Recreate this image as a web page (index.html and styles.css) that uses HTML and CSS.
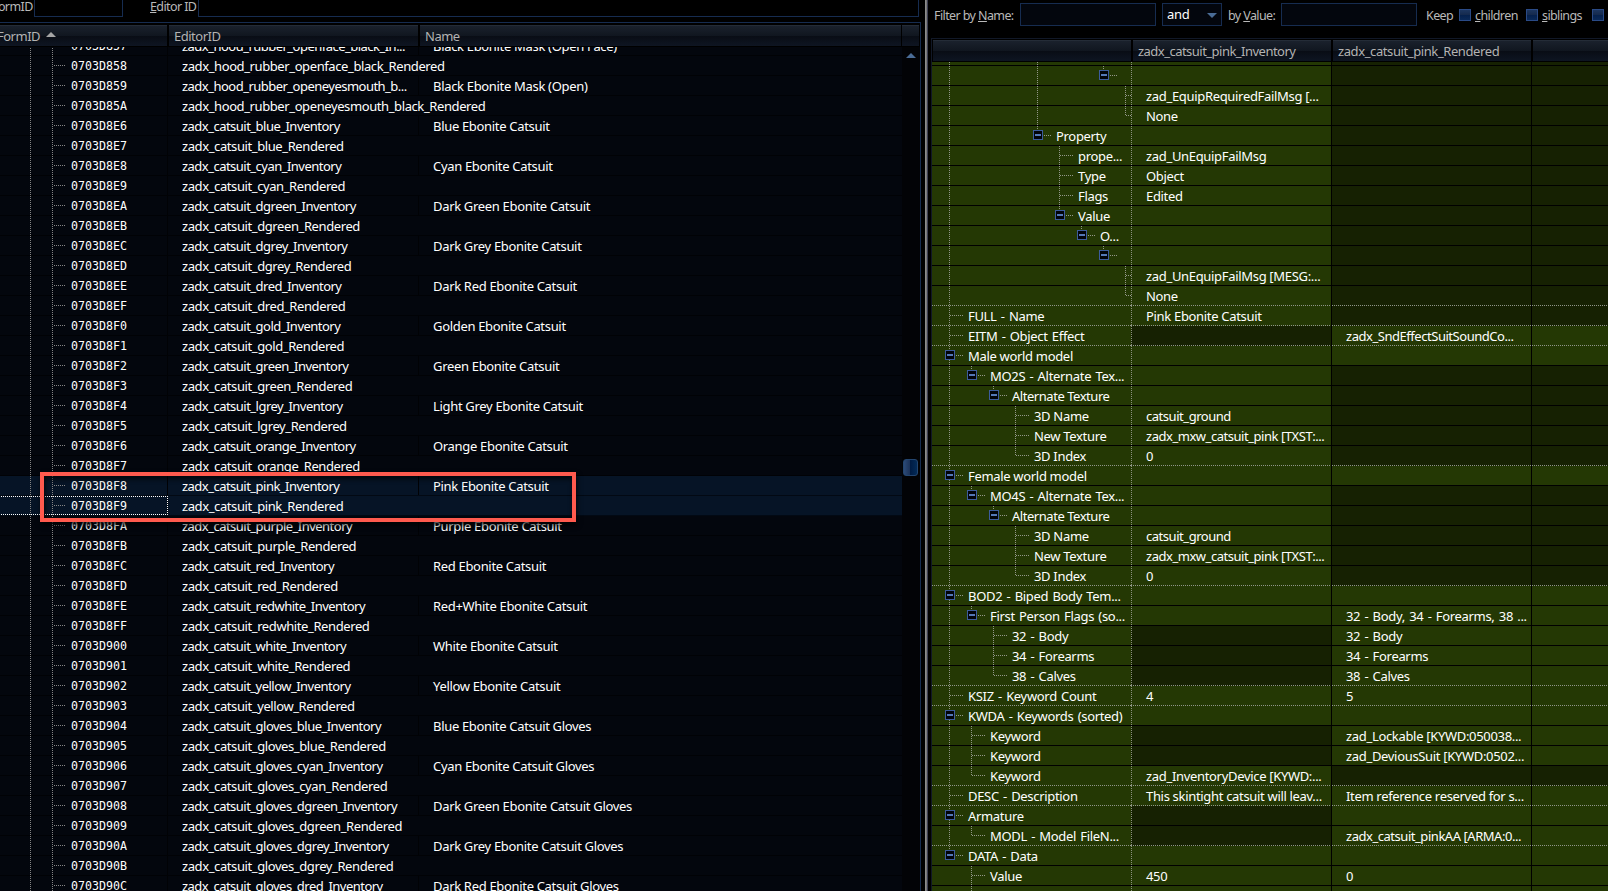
FILE: index.html
```
<!DOCTYPE html>
<html lang="en">
<head>
    <meta charset="UTF-8">
    <title>Record Viewer</title>
    <link rel="stylesheet" href="styles.css">
</head>
<body>
    <div class="left-pane">
        <div class="search-bar">
            <label class="form-label">FormID</label>
            <div class="field form-field"></div>
            <label class="editor-label"><u>E</u>ditor ID</label>
            <div class="field editor-field"></div>
        </div>
        <div class="list-box">
            <div class="list-header">
                <div class="head h-form"><span>FormID</span><svg width="10" height="5"><path d="M5 0L10 5H0z" fill="#a5a5a5"/></svg></div>
                <div class="head h-editor">EditorID</div>
                <div class="head h-name">Name</div>
                <div class="head h-end"></div>
            </div>
            <div class="list-body">
                <div class="rows" id="records"></div>
                <div class="scrollbar">
                    <svg width="10" height="5"><path d="M5 0L10 5H0z" fill="#4a6c96"/></svg>
                    <div class="thumb"></div>
                </div>
            </div>
        </div>
        <div class="highlight"></div>
    </div>
    <div class="splitter"></div>
    <div class="right-pane">
        <div class="filter-bar">
            <label class="name-label">Filter by <u>N</u>ame:</label>
            <div class="field filter-field"></div>
            <div class="field select"><span>and</span><svg width="10" height="5"><path d="M0 0H10L5 5z" fill="#4a6c96"/></svg></div>
            <label class="value-label">by <u>V</u>alue:</label>
            <div class="field filter-field"></div>
            <span class="keep">Keep</span>
            <i class="check"></i><label class="children"><u>c</u>hildren</label>
            <i class="check"></i><label class="siblings"><u>s</u>iblings</label>
            <i class="check"></i>
        </div>
        <div class="grid-box">
            <div class="grid-header">
                <div class="head"></div>
                <div class="head tight">zadx_catsuit_pink_Inventory</div>
                <div class="head rendered">zadx_catsuit_pink_Rendered</div>
                <div class="head"></div>
            </div>
            <div class="grid-body"><div id="details"></div></div>
        </div>
    </div>
    <script src="script.js"></script>
</body>
</html>
```
FILE: styles.css
```
* { padding: 0; margin: 0; box-sizing: border-box; }
body {
    background: #000;
    color: #fff;
    font: 13px/20px "Noto Sans", "Open Sans", sans-serif;
    letter-spacing: -0.32px;
    width: 1608px;
    height: 891px;
    overflow: hidden;
    display: flex;
    white-space: nowrap;
}
svg { display: block; flex: none; }
label, .keep {
    color: #b9b9b9;
    font-size: 12.5px;
    letter-spacing: -0.6px;
    flex: none;
}
.field {
    border: 1px solid #162c50;
    background: #03060d;
    flex: none;
}

/* left side */
.left-pane {
    width: 921px;
    flex: none;
    position: relative;
    display: flex;
    flex-direction: column;
}
.search-bar {
    height: 22px;
    display: flex;
    line-height: 13px;
}
.search-bar .field {
    height: 17px;
    border-top: none;
    background: #000;
}
.form-label { width: 34px; margin-left: -8px; margin-right: 8px; }
.form-field { width: 89px; }
.editor-label { width: 48px; margin-left: 27px; }
.editor-field { width: 721px; }
.list-box {
    flex: 1;
    border-top: 1px solid #162c50;
    border-right: 1px solid #162c50;
    padding-top: 2px;
    overflow: hidden;
}
.list-header, .grid-header { display: flex; gap: 2px; }
.list-header { height: 22px; letter-spacing: -0.5px; }
.head {
    height: 21px;
    background: linear-gradient(#1a212c 0, #10161f 50%, #090d15 51%, #0e1522 100%);
    border-top: 1px solid #242c37;
    color: #b3b3b3;
    line-height: 21px;
    flex: none;
}
.h-form { width: 167px; display: flex; }
.h-form span { width: 49px; margin-left: -3px; }
.h-form svg { margin-top: 6px; }
.h-editor { width: 249px; padding-left: 5px; }
.h-name { width: 481px; padding-left: 5px; }
.h-end { width: 17px; margin-left: -1px; }
.list-body {
    display: flex;
    height: 844px;
    overflow: hidden;
}
.rows { width: 902px; margin-top: -11px; }
.record {
    display: flex;
    height: 20px;
    background: #03060d;
    border-bottom: 1px solid #010205;
}
.record.selected { background: #061426; border-color: #020913; }
.record > div { flex: none; }
.rec-id {
    width: 169px;
    margin-left: -1px;
    padding-left: 72px;
    border-right: 1px solid #010205;
    font: 11.65px/20px "DejaVu Sans Mono", monospace;
    letter-spacing: 0;
    background:
        repeating-linear-gradient(#858585 0 1px, transparent 1px 2px) 31px 0 / 1px 20px no-repeat,
        repeating-linear-gradient(#858585 0 1px, transparent 1px 2px) 53px 0 / 1px 20px no-repeat,
        repeating-linear-gradient(90deg, #858585 0 1px, transparent 1px 2px) 55px 9px / 12px 1px no-repeat;
}
.focused .rec-id {
    outline: 1px dotted #fff;
    outline-offset: -1px;
}
.rec-editor { width: 251px; padding-left: 14px; line-height: 21px; }
.rec-name { padding-left: 14px; line-height: 21px; }
.record .named { border-right: 1px solid #010205; }
.tight { letter-spacing: -0.52px; }
.rendered { letter-spacing: -0.4px; }
.texture { letter-spacing: -0.46px; }
.dashed { word-spacing: 1.2px; }
.scrollbar {
    width: 18px;
    background: #020306;
    padding: 6px 1px 0;
}
.scrollbar svg { margin: 0 3px; }
.thumb {
    width: 15px;
    height: 17px;
    margin-top: 401px;
    border: 1px solid #23456f;
    border-radius: 3px;
    background: linear-gradient(90deg, #2c4a77, #1b3157 48%, #001c44 50%, #032b58);
}
/* marker lies over the two selected rows */
.highlight {
    position: absolute;
    left: 40px;
    top: 472px;
    width: 536px;
    height: 50px;
    border: 4px solid #ff5a4e;
    box-shadow: 1px 3px 5px rgba(0, 0, 0, .8), inset 1px 3px 5px rgba(0, 0, 0, .7);
}

.splitter {
    width: 3px;
    margin-left: 4px;
    background: linear-gradient(90deg, #8c8c8c 0 1px, #777 1px 2px, #3b3d50 2px);
    flex: none;
}

/* right side */
.right-pane {
    width: 677px;
    margin-left: 3px;
    flex: none;
}
.filter-bar {
    height: 38px;
    padding: 3px 0 0 3px;
    display: flex;
    line-height: 26px;
    overflow: hidden;
}
.filter-field { width: 136px; height: 23px; }
.name-label { width: 86px; }
.select {
    width: 60px;
    height: 23px;
    margin-left: 6px;
    padding: 0 4px;
    display: flex;
    justify-content: space-between;
    line-height: 21px;
}
.select svg { margin-top: 9px; }
.value-label { width: 53px; margin-left: 6px; }
.keep { width: 33px; margin-left: 9px; }
.check {
    width: 12px;
    height: 12px;
    margin-top: 6px;
    border: 1px solid #2a4a86;
    background: linear-gradient(#1c3660, #15294c 50%, #05204c 51%, #0a2958);
    flex: none;
}
.children, .siblings { margin-left: 4px; line-height: 25px; }
.children { width: 51px; }
.siblings { width: 50px; }
.grid-box {
    border: 1px solid #111827;
    border-width: 1px 0 0 1px;
    padding-top: 1px;
    overflow: hidden;
}
.grid-header { height: 22px; padding-left: 1px; }
.grid-header .head { width: 198px; padding-left: 5px; }
.grid-body { height: 829px; overflow: hidden; }
#details { margin-top: -16px; }
.node {
    display: flex;
    height: 20px;
}
.cell {
    width: 200px;
    height: 20px;
    padding-left: 14px;
    background: #243804;
    border-right: 1px solid #000;
    border-bottom: 1px solid #000;
    overflow: hidden;
    line-height: 21px;
    flex: none;
}
.cell.none { background: #162102; }
.cell:first-child {
    width: 199px;
    padding: 0;
    border-right: none;
    display: flex;
}
.cell:nth-child(2) {
    width: 201px;
    padding-left: 15px;
    background-image: repeating-linear-gradient(#8c9280 0 1px, transparent 1px 2px);
    background-size: 1px 20px;
    background-repeat: no-repeat;
}
.group-end .cell {
    border-bottom: none;
    background-image: repeating-linear-gradient(90deg, #8f9589 0 1px, transparent 1px 2px);
    background-size: 100% 1px;
    background-position: 0 19px;
    background-repeat: no-repeat;
}
.group-end .cell:nth-child(2) {
    background-image: repeating-linear-gradient(90deg, #8f9589 0 1px, transparent 1px 2px), repeating-linear-gradient(#8c9280 0 1px, transparent 1px 2px);
    background-size: 100% 1px, 1px 20px;
    background-position: 0 19px, 0 0;
}
.guide {
    width: 22px;
    height: 20px;
    flex: none;
}
.guide svg { overflow: visible; }
.guide:first-child { margin-left: 6px; }
.caption { padding-left: 8px; }
```
FILE: script.js
```
// [FormID, EditorID, Name]
const records = [
    ["0703D857", "zadx_hood_rubber_openface_black_In...", "Black Ebonite Mask (Open Face)"],
    ["0703D858", "zadx_hood_rubber_openface_black_Rendered", ""],
    ["0703D859", "zadx_hood_rubber_openeyesmouth_b...", "Black Ebonite Mask (Open)"],
    ["0703D85A", "zadx_hood_rubber_openeyesmouth_black_Rendered", ""]
];

// every item has an inventory record followed by a rendered one
const items = [
    ["catsuit_blue", "Blue Ebonite Catsuit"],
    ["catsuit_cyan", "Cyan Ebonite Catsuit"],
    ["catsuit_dgreen", "Dark Green Ebonite Catsuit"],
    ["catsuit_dgrey", "Dark Grey Ebonite Catsuit"],
    ["catsuit_dred", "Dark Red Ebonite Catsuit"],
    ["catsuit_gold", "Golden Ebonite Catsuit"],
    ["catsuit_green", "Green Ebonite Catsuit"],
    ["catsuit_lgrey", "Light Grey Ebonite Catsuit"],
    ["catsuit_orange", "Orange Ebonite Catsuit"],
    ["catsuit_pink", "Pink Ebonite Catsuit"],
    ["catsuit_purple", "Purple Ebonite Catsuit"],
    ["catsuit_red", "Red Ebonite Catsuit"],
    ["catsuit_redwhite", "Red+White Ebonite Catsuit"],
    ["catsuit_white", "White Ebonite Catsuit"],
    ["catsuit_yellow", "Yellow Ebonite Catsuit"],
    ["catsuit_gloves_blue", "Blue Ebonite Catsuit Gloves"],
    ["catsuit_gloves_cyan", "Cyan Ebonite Catsuit Gloves"],
    ["catsuit_gloves_dgreen", "Dark Green Ebonite Catsuit Gloves"],
    ["catsuit_gloves_dgrey", "Dark Grey Ebonite Catsuit Gloves"],
    ["catsuit_gloves_dred", "Dark Red Ebonite Catsuit Gloves"]
];
let formId = 0x0703D8E6;
items.forEach(([id, name], i) => {
    // ids jump over nothing here, they simply count up in hex
    records.push([hex(formId++), "zadx_" + id + "_Inventory", name]);
    if (i < items.length - 1) {
        records.push([hex(formId++), "zadx_" + id + "_Rendered", ""]);
    }
});

function hex(n) {
    return n.toString(16).toUpperCase().padStart(8, "0");
}

document.getElementById("records").innerHTML = records.map(([id, editor, name]) => {
    let cls = "record";
    if (editor.includes("_pink_")) cls += " selected";
    if (id === "0703D8F9") cls += " focused";
    return `<div class="${cls}"><div class="rec-id">${id}</div><div class="rec-editor ${name ? "named tight" : "rendered"}">${editor}</div><div class="rec-name">${name}</div></div>`;
}).join("");

// [level, expanded, caption, inventory value, rendered value], null = not present
const nodes = [
    [6, 1, "", "", null],
    [7, 1, "", "", null],
    [8, 0, "", "zad_EquipRequiredFailMsg [...", null],
    [8, 0, "", "None", null],
    [4, 1, "Property", "", null],
    [5, 0, "prope...", "zad_UnEquipFailMsg", null],
    [5, 0, "Type", "Object", null],
    [5, 0, "Flags", "Edited", null],
    [5, 1, "Value", "", null],
    [6, 1, "O...", "", null],
    [7, 1, "", "", null],
    [8, 0, "", "zad_UnEquipFailMsg [MESG:...", null],
    [8, 0, "", "None", null],
    [0, 0, "FULL - Name", "Pink Ebonite Catsuit", null],
    [0, 0, "EITM - Object Effect", null, "zadx_SndEffectSuitSoundCo..."],
    [0, 1, "Male world model", "", ""],
    [1, 1, "MO2S - Alternate Tex...", "", null],
    [2, 1, "Alternate Texture", "", null],
    [3, 0, "3D Name", "catsuit_ground", null],
    [3, 0, "New Texture", "zadx_mxw_catsuit_pink [TXST:...", null],
    [3, 0, "3D Index", "0", null],
    [0, 1, "Female world model", "", ""],
    [1, 1, "MO4S - Alternate Tex...", "", null],
    [2, 1, "Alternate Texture", "", null],
    [3, 0, "3D Name", "catsuit_ground", null],
    [3, 0, "New Texture", "zadx_mxw_catsuit_pink [TXST:...", null],
    [3, 0, "3D Index", "0", null],
    [0, 1, "BOD2 - Biped Body Tem...", "", ""],
    [1, 1, "First Person Flags (so...", "", "32 - Body, 34 - Forearms, 38 ..."],
    [2, 0, "32 - Body", null, "32 - Body"],
    [2, 0, "34 - Forearms", null, "34 - Forearms"],
    [2, 0, "38 - Calves", null, "38 - Calves"],
    [0, 0, "KSIZ - Keyword Count", "4", "5"],
    [0, 1, "KWDA - Keywords (sorted)", "", ""],
    [1, 0, "Keyword", null, "zad_Lockable [KYWD:050038..."],
    [1, 0, "Keyword", null, "zad_DeviousSuit [KYWD:0502..."],
    [1, 0, "Keyword", "zad_InventoryDevice [KYWD:...", null],
    [0, 0, "DESC - Description", "This skintight catsuit will leav...", "Item reference reserved for s..."],
    [0, 1, "Armature", null, ""],
    [1, 0, "MODL - Model FileN...", null, "zadx_catsuit_pinkAA [ARMA:0..."],
    [0, 1, "DATA - Data", "", ""],
    [1, 0, "Value", "450", "0"],
    [1, 0, "", "", ""]
];

// does the branch line of this level go on below row i
function continues(i, level) {
    const next = nodes.slice(i + 1).find(n => n[0] <= level);
    return next !== undefined && next[0] === level;
}

function dots(d) {
    return `<path d="${d}" stroke="#929788" stroke-dasharray="1 1" fill="none"/>`;
}

function guides(i) {
    const [level, expanded] = nodes[i];
    let html = "";
    for (let l = 0; l <= level; l++) {
        let art = "";
        const below = continues(i, l);
        if (l < level) {
            if (below) art = dots("M11.5 0V20");
        } else {
            art = dots(`M11.5 0V${below ? 20 : 10}`) + dots("M12 9.5H25");
            if (expanded) {
                art += '<rect x="7.5" y="4.5" width="9" height="9" fill="#02040a" stroke="#3c5c9c"/><path d="M9 9H15" stroke="#5479b8" stroke-width="2"/>';
            }
        }
        html += `<div class="guide"><svg width="22" height="20">${art}</svg></div>`;
    }
    return html;
}

// spacing class for a piece of text
function spacing(text) {
    if (/catsuit_|SndEffect|^Alternate/.test(text)) return " texture";
    if (/ - |\(so/.test(text)) return " dashed";
    return "";
}

function cell(value) {
    return `<div class="cell${value === null ? " none" : spacing(value)}">${value || ""}</div>`;
}

document.getElementById("details").innerHTML = nodes.map((n, i) => {
    const groupEnd = nodes[i + 1] && nodes[i + 1][0] === 0;
    return `<div class="node${groupEnd ? " group-end" : ""}"><div class="cell">${guides(i)}<span class="caption${spacing(n[2])}">${n[2]}</span></div>${cell(n[3])}${cell(n[4])}${cell(n[4] === null ? null : "")}</div>`;
}).join("");
```
